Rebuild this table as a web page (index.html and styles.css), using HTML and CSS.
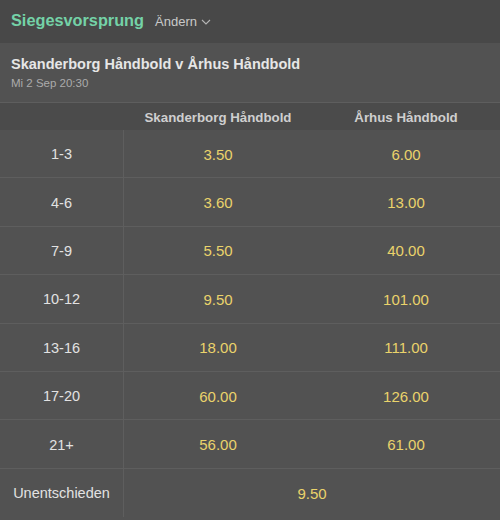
FILE: index.html
```html
<!DOCTYPE html>
<html lang="de">
<head>
<meta charset="utf-8">
<link rel="stylesheet" href="styles.css">
</head>
<body>
<div class="top">
  <span class="title">Siegesvorsprung</span>
  <span class="change">Ändern
    <svg class="chev" width="10" height="6" viewBox="0 0 10 6"><path d="M1 1 L5 5 L9 1" fill="none" stroke="#b5b5b5" stroke-width="1.1"/></svg>
  </span>
</div>
<div class="match">
  <div class="teams">Skanderborg Håndbold v Århus Håndbold</div>
  <div class="date">Mi 2 Sep 20:30</div>
</div>
<div class="grid">
  <div class="hcell"></div>
  <div class="hcell">Skanderborg Håndbold</div>
  <div class="hcell">Århus Håndbold</div>

  <div class="lab">1-3</div><div class="odd">3.50</div><div class="odd">6.00</div>
  <div class="lab">4-6</div><div class="odd">3.60</div><div class="odd">13.00</div>
  <div class="lab">7-9</div><div class="odd">5.50</div><div class="odd">40.00</div>
  <div class="lab">10-12</div><div class="odd">9.50</div><div class="odd">101.00</div>
  <div class="lab">13-16</div><div class="odd">18.00</div><div class="odd">111.00</div>
  <div class="lab">17-20</div><div class="odd">60.00</div><div class="odd">126.00</div>
  <div class="lab">21+</div><div class="odd">56.00</div><div class="odd">61.00</div>
  <div class="lab last">Unentschieden</div><div class="odd span last">9.50</div>
</div>
</body>
</html>
```
FILE: styles.css
```css
html, body {
  margin: 0;
  padding: 0;
  background: #525252;
  font-family: "Liberation Sans", Arial, sans-serif;
}
.top {
  height: 43px;
  background: #484848;
  display: flex;
  align-items: center;
  padding: 0 11px;
  box-sizing: border-box;
}
.title {
  color: #74d2a7;
  font-weight: bold;
  font-size: 16.3px;
  margin-right: 11px;
  position: relative;
  top: -1px;
}
.change {
  color: #c8c8c8;
  font-size: 13px;
  display: flex;
  align-items: center;
  gap: 4px;
  position: relative;
  top: 0;
}
.chev { margin-top: 1px; }
.match {
  height: 60px;
  border-bottom: 1px solid #5e5e5e;
  padding: 13px 11px 0;
  box-sizing: border-box;
}
.teams {
  color: #e6e6e6;
  font-weight: bold;
  font-size: 14.5px;
}
.date {
  color: #ababab;
  font-size: 11.5px;
  margin-top: 5px;
}
.grid {
  display: grid;
  grid-template-columns: 124px 1fr 1fr;
  grid-template-rows: 27px repeat(8, 48.4px);
}
.hcell {
  background: #4b4b4b;
  color: #cfcfcf;
  font-weight: bold;
  font-size: 13.3px;
  display: flex;
  align-items: center;
  justify-content: center;
  padding-top: 2px;
  box-sizing: border-box;
}
.lab, .odd {
  display: flex;
  align-items: center;
  justify-content: center;
  border-bottom: 1px solid #5e5e5e;
  box-sizing: border-box;
  padding-top: 1px;
}
.lab {
  color: #e2e2e2;
  font-size: 14.5px;
  border-right: 1px solid #5e5e5e;
}
.odd {
  color: #ead36b;
  font-size: 15px;
}
.last {
  border-bottom: none;
}
.span {
  grid-column: 2 / 4;
}
```
